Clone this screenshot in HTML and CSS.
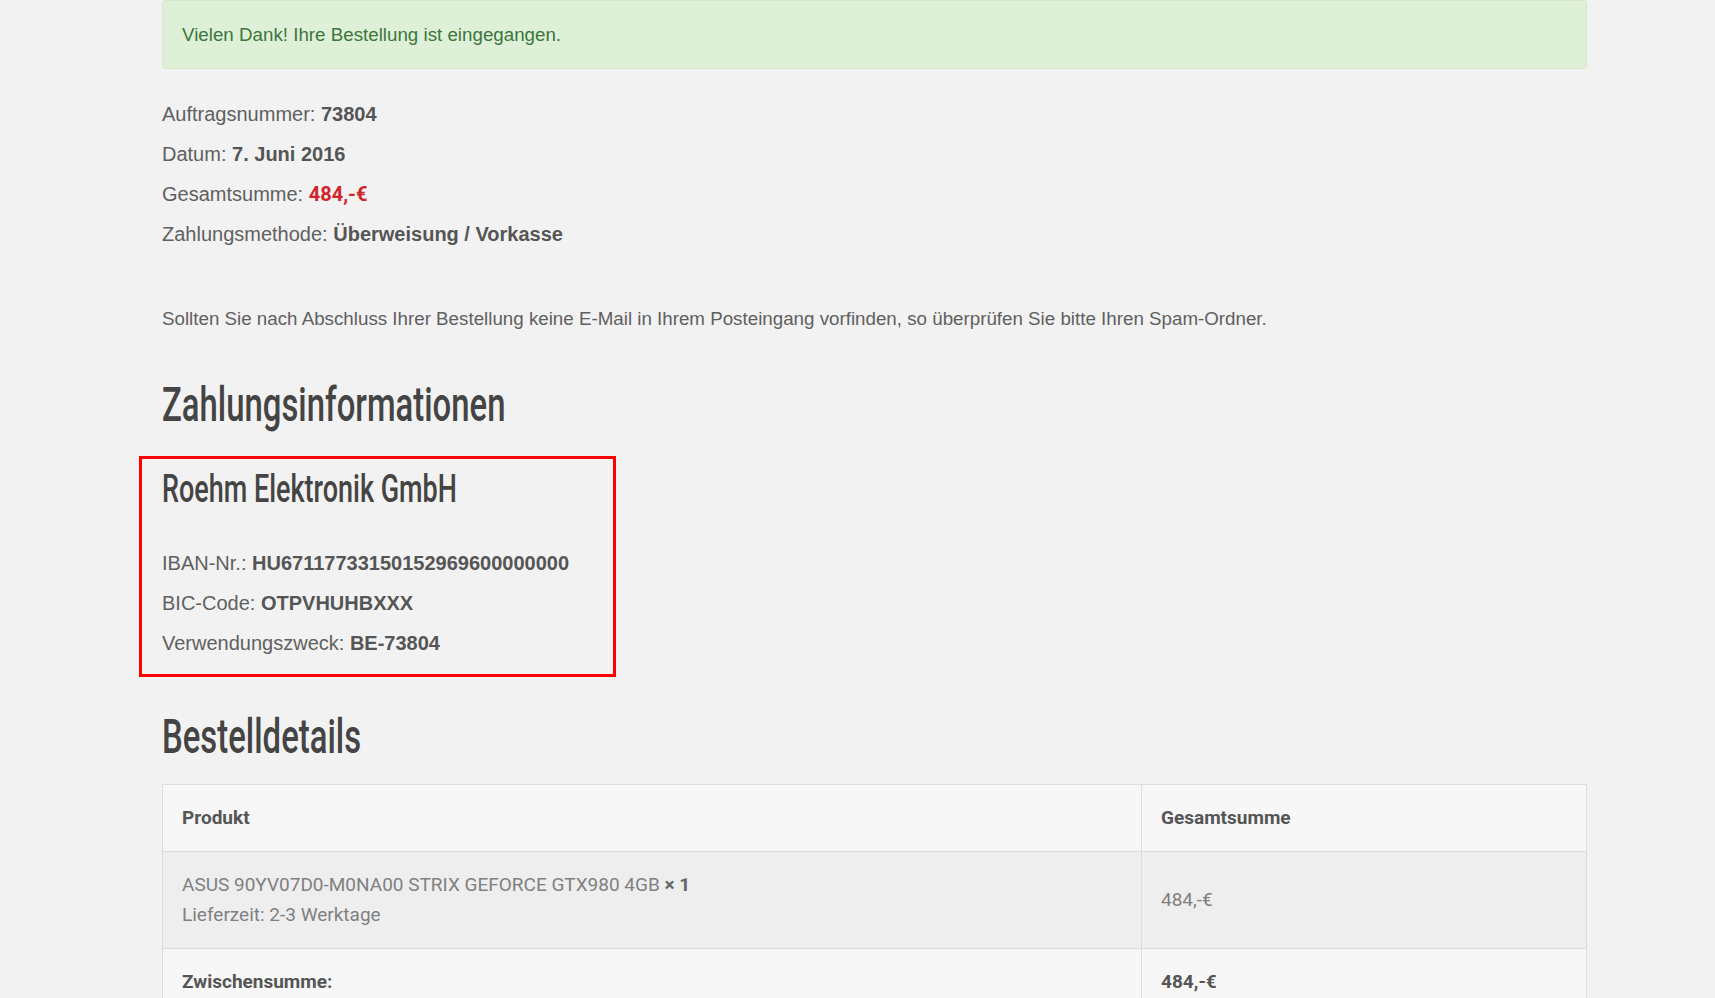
FILE: index.html
```html
<!DOCTYPE html>
<html lang="de">
<head>
    <meta charset="UTF-8">
    <title>Bestellung erhalten</title>
    <link rel="stylesheet" href="styles.css">
</head>
<body>
    <div class="content">
        <div class="alert alert-success">Vielen Dank! Ihre Bestellung ist eingegangen.</div>

        <ul class="order-overview">
            <li>Auftragsnummer: <strong>73804</strong></li>
            <li>Datum: <strong>7. Juni 2016</strong></li>
            <li>Gesamtsumme: <strong class="amount">484,-€</strong></li>
            <li>Zahlungsmethode: <strong>Überweisung / Vorkasse</strong></li>
        </ul>

        <p class="spam-hint">Sollten Sie nach Abschluss Ihrer Bestellung keine E-Mail in Ihrem Posteingang vorfinden, so überprüfen Sie bitte Ihren Spam-Ordner.</p>

        <h2>Zahlungsinformationen</h2>

        <!-- Bankverbindung (rot markiert) -->
        <div class="bank-details">
            <h3>Roehm Elektronik GmbH</h3>
            <ul class="bank-list">
                <li>IBAN-Nr.: <strong>HU67117733150152969600000000</strong></li>
                <li>BIC-Code: <strong>OTPVHUHBXXX</strong></li>
                <li>Verwendungszweck: <strong>BE-73804</strong></li>
            </ul>
        </div>

        <h2>Bestelldetails</h2>

        <table class="order-details">
            <thead>
                <tr>
                    <th class="product-name">Produkt</th>
                    <th class="product-total">Gesamtsumme</th>
                </tr>
            </thead>
            <tbody>
                <tr class="order-item">
                    <td class="product-name">
                        ASUS 90YV07D0-M0NA00 STRIX GEFORCE GTX980 4GB <strong class="product-quantity">× 1</strong><br>
                        Lieferzeit: 2-3 Werktage
                    </td>
                    <td class="product-total">484,-€</td>
                </tr>
            </tbody>
            <tfoot>
                <tr>
                    <th>Zwischensumme:</th>
                    <td><strong>484,-€</strong></td>
                </tr>
            </tfoot>
        </table>
    </div>
</body>
</html>
```

FILE: styles.css
```css
body {
    background-color: #f2f2f2;
    font-family: "Liberation Sans", Arial, sans-serif;
    font-size: 18.75px;
    color: #606060;
    margin: 0;
}
.content {
    width: 1425px;
    margin-left: 162px;
}
strong {
    color: #555;
}
.alert {
    padding: 22px 19px 21px;
    line-height: 24px;
    border: 1px solid transparent;
    border-radius: 4px;
    font-size: 18.75px;
}
.alert-success {
    background-color: #dff0d8;
    border-color: #d6e9c6;
    color: #3c763d;
}
.order-overview,
.bank-list {
    list-style: none;
    margin: 0;
    padding: 0;
}
.order-overview {
    margin-top: 25px;
}
.order-overview li,
.bank-list li {
    font-size: 20px;
    line-height: 40px;
}
.amount {
    font-family: Roboto, sans-serif;
    color: #d0252b;
}
.spam-hint {
    line-height: 40px;
    margin: 45px 0 0;
}
/* schmale Überschriften */
h2, h3 {
    font-family: Roboto, sans-serif;
    font-weight: 500;
    color: #444;
    margin: 0;
    transform: scaleX(0.685);
    transform-origin: left center;
}
h2 {
    font-size: 48px;
    line-height: 56px;
    margin-top: 38px;
}
.bank-details {
    width: 477px;
    box-sizing: border-box;
    margin: 23px 0 0 -23px;
    padding: 10px 20px 11px 20px;
    border: 3px solid #f00;
}
h3 {
    font-size: 38px;
    line-height: 40px;
    margin-bottom: 34px;
    transform: scaleX(0.71);
}
.bank-details + h2 {
    margin-top: 32px;
}
.order-details {
    width: 100%;
    border-collapse: collapse;
    margin-top: 19px;
    font-family: Roboto, sans-serif;
    font-size: 19px;
    line-height: 30px;
}
.order-details th,
.order-details td {
    border: 1px solid #ddd;
    padding: 18px 19px;
    text-align: left;
    background-color: #f7f7f7;
}
.order-details th {
    color: #555;
    font-weight: bold;
}
.order-details th.product-name {
    width: 940px;
}
.order-details tbody td {
    background-color: #eee;
    color: #808080;
    vertical-align: middle;
}
.order-details tfoot td {
    color: #555;
}
.product-quantity {
    color: #666;
}
```
